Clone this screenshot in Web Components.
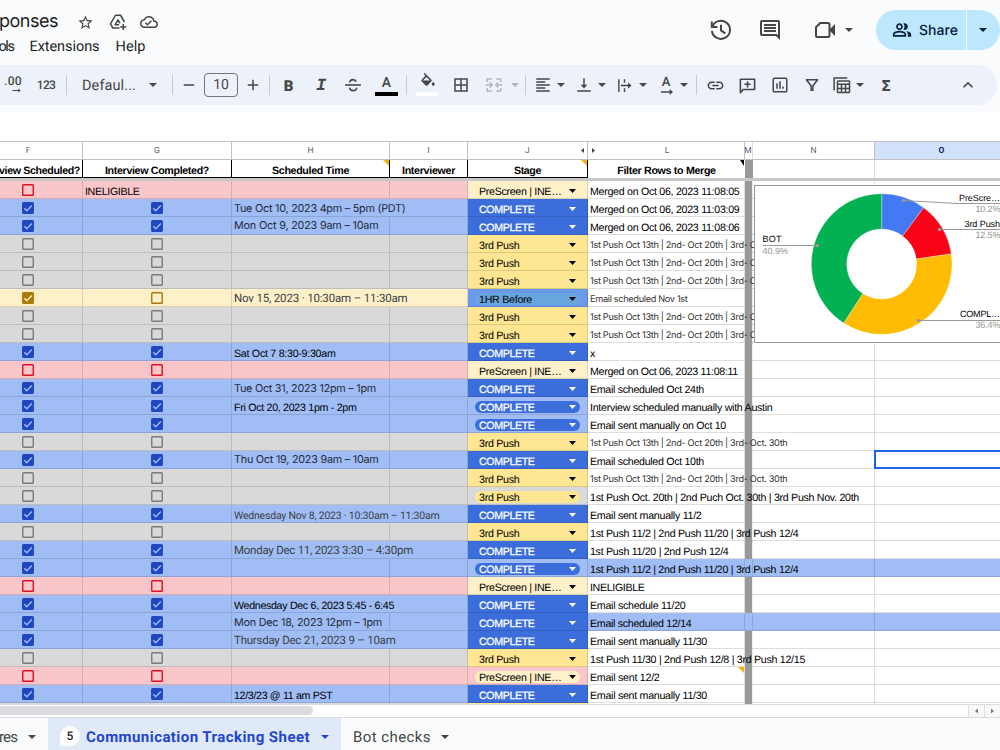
<!DOCTYPE html>
<html lang="en">
<head>
<meta charset="utf-8">
<title>Communication Tracking Sheet</title>
<style>
  html, body { margin: 0; padding: 0; }
  body {
    width: 1000px;
    height: 750px;
    overflow: hidden;
    background: #f9fbfd;
    font-family: "Liberation Sans", Arial, sans-serif;
    text-rendering: geometricPrecision;
  }
</style>
</head>
<body>
<sheets-app></sheets-app>

<script>
const ICONS = {
  star: '<path d="M22 9.24l-7.19-.62L12 2 9.19 8.63 2 9.24l5.46 4.73L5.82 21 12 17.27 18.18 21l-1.63-7.03L22 9.24zM12 15.4l-3.76 2.27 1-4.28-3.32-2.88 4.38-.38L12 6.1l1.71 4.04 4.38.38-3.32 2.88 1 4.28L12 15.4z"/>',
  drive: '<g fill="none" stroke="currentColor" stroke-width="2" stroke-linejoin="round"><path d="M14 20H5.2L2 14.6 8.6 3h6.8l5.2 9"/><path d="M13.5 15.8H8.2L12 9.2l2.6 4.6"/><path d="M19 14.5v8M15 18.5h8"/></g>',
  cloud: '<path d="M19.35 10.04C18.67 6.59 15.64 4 12 4 9.11 4 6.6 5.64 5.35 8.04 2.34 8.36 0 10.91 0 14c0 3.31 2.69 6 6 6h13c2.76 0 5-2.24 5-5 0-2.64-2.05-4.78-4.65-4.96zM19 18H6c-2.21 0-4-1.79-4-4 0-2.05 1.53-3.76 3.56-3.97l1.07-.11.5-.95C8.08 7.14 9.94 6 12 6c2.62 0 4.88 1.86 5.39 4.43l.3 1.5 1.53.11c1.56.1 2.78 1.41 2.78 2.96 0 1.65-1.35 3-3 3zm-9-3.82l-2.09-2.09L6.5 13.5 10 17l6.01-6.01-1.41-1.41z"/>',
  history: '<g fill="none" stroke="currentColor" stroke-width="2"><path d="M3.2 9.2A9.1 9.1 0 1 1 2.9 13"/><path d="M2.8 3.6V9h5.6"/><path d="M12 6.8v5.6l4.3 3"/></g>',
  comment: '<path d="M21.99 4c0-1.1-.89-2-1.99-2H4c-1.1 0-2 .9-2 2v12c0 1.1.9 2 2 2h14l4 4-.01-18zM20 4v13.17L18.83 16H4V4h16zM6 12h12v2H6zm0-3h12v2H6zm0-3h12v2H6z"/>',
  video: '<path d="M7.2 5H15a1.5 1.5 0 0 1 1.5 1.5v11A1.5 1.5 0 0 1 15 19H4.5a1.5 1.5 0 0 1-1.5-1.5V9.2z" fill="none" stroke="currentColor" stroke-width="2" stroke-linejoin="round"/><path d="M17 11l5-5v12l-5-5z"/>',
  people: '<path d="M16.67 13.13C18.04 14.06 19 15.32 19 17v3h4v-3c0-2.18-3.57-3.47-6.33-3.87zM15 12c2.21 0 4-1.79 4-4s-1.79-4-4-4c-.47 0-.91.1-1.33.24C14.5 5.27 15 6.58 15 8s-.5 2.73-1.33 3.76c.42.14.86.24 1.33.24zM9 12c2.21 0 4-1.79 4-4s-1.79-4-4-4-4 1.79-4 4 1.79 4 4 4zm0-6c1.1 0 2 .9 2 2s-.9 2-2 2-2-.9-2-2 .9-2 2-2zm0 7c-2.67 0-8 1.34-8 4v3h16v-3c0-2.66-5.33-4-8-4zm6 5H3v-.99C3.2 16.29 6.3 15 9 15s5.8 1.29 6 2v1z"/>',
  minus: '<path d="M5 11h14v2H5z"/>',
  plus: '<path d="M5 11h6V5h2v6h6v2h-6v6h-2v-6H5z"/>',
  strike: '<g fill="none" stroke="currentColor" stroke-width="2.1"><path d="M1.5 12h21"/><path d="M7.5 8.6C7.8 6.2 9.5 4.8 12 4.8c2 0 3.6 1 4.3 2.8"/><path d="M7.3 15.5c.4 2.5 2.2 4 4.8 4 2.8 0 4.7-1.4 4.7-4"/></g>',
  fill: '<path d="M16.56 8.94L7.62 0 6.21 1.41l2.38 2.38-5.15 5.15c-.59.59-.59 1.54 0 2.12l5.5 5.5c.29.29.68.44 1.06.44s.77-.15 1.06-.44l5.5-5.5c.59-.58.59-1.53 0-2.12zM5.21 10L10 5.21 14.79 10H5.21zM19 11.5s-2 2.17-2 3.5c0 1.1.9 2 2 2s2-.9 2-2c0-1.33-2-3.5-2-3.5z"/>',
  borders: '<path d="M3 3v18h18V3H3zm8 16H5v-6h6v6zm0-8H5V5h6v6zm8 8h-6v-6h6v6zm0-8h-6V5h6v6z"/>',
  merge: '<g fill="none" stroke="currentColor" stroke-width="2"><path d="M9 4H3v4M9 20H3v-4M15 4h6v4M15 20h6v-4"/><path d="M1 12h8M23 12h-8M6.5 8.8L9.5 12l-3 3.2M17.5 8.8L14.5 12l3 3.2"/></g>',
  alignLeft: '<path d="M15 15H3v2h12v-2zm0-8H3v2h12V7zM3 13h18v-2H3v2zm0 8h18v-2H3v2zM3 3v2h18V3H3z"/>',
  alignBottom: '<path d="M16.5 11.5H13V3h-2v8.5H7.5L12 16.5zM3 19v2h18v-2H3z"/>',
  wrap: '<path d="M3 3h2v18H3zM11 3h2v5h-2zM11 16h2v5h-2zM7 11h10V7.8l5 4.2-5 4.2V13H7z"/>',
  link: '<path d="M3.9 12c0-1.71 1.39-3.1 3.1-3.1h4V7H7c-2.76 0-5 2.24-5 5s2.24 5 5 5h4v-1.9H7c-1.71 0-3.1-1.39-3.1-3.1zM8 13h8v-2H8v2zm9-6h-4v1.9h4c1.71 0 3.1 1.39 3.1 3.1s-1.39 3.1-3.1 3.1h-4V17h4c2.76 0 5-2.24 5-5s-2.24-5-5-5z"/>',
  addComment: '<path d="M3 21V4h18v13H6.5z" fill="none" stroke="currentColor" stroke-width="2" stroke-linejoin="round"/><path d="M11 6.5h2v3h3v2h-3v3h-2v-3H8v-2h3z"/>',
  chart: '<rect x="3" y="3" width="18" height="18" rx="1.5" fill="none" stroke="currentColor" stroke-width="2"/><path d="M7 9.5h2V17H7zM11 7h2v10h-2zM15 14h2v3h-2z"/>',
  filter: '<path d="M4.5 5h15L13.2 13v6h-2.4v-6z" fill="none" stroke="currentColor" stroke-width="2" stroke-linejoin="round"/>',
  table: '<g fill="none" stroke="currentColor" stroke-width="2"><path d="M1.5 19V2.5H19"/><rect x="6" y="6.5" width="16" height="15.5" rx="1"/><path d="M6 11h16M6 16.5h16M11.3 11v11M16.7 11v11"/></g>',
  chevron: '<path d="M12 8l-6 6 1.41 1.41L12 10.83l4.59 4.58L18 14z"/>',
  decimal: '<path d="M3 11h13V7.5l5 4.5-5 4.5V13H3z"/>'
};

// Line of text, letter-spaced to a given width
class FitText extends HTMLElement {
  constructor() {
    super();
    this.attachShadow({ mode: 'open' });
    this.shadowRoot.innerHTML = `
      <style>
        :host { display: block; white-space: nowrap; flex: none; }
        span { display: inline-block; vertical-align: top; }
      </style>
      <span><slot></slot></span>
    `;
  }

  connectedCallback() {
    const w = parseFloat(this.getAttribute('w'));
    const chars = this.textContent.length;
    if (!w || !chars) return;
    const span = this.shadowRoot.querySelector('span');
    const natural = span.getBoundingClientRect().width;
    span.style.letterSpacing = ((w - natural) / chars).toFixed(3) + 'px';
  }
}
customElements.define('fit-text', FitText);

class SheetIcon extends HTMLElement {
  constructor() {
    super();
    this.attachShadow({ mode: 'open' });
  }

  connectedCallback() {
    const size = this.getAttribute('size') || 18;
    this.shadowRoot.innerHTML = `
      <style>
        :host { display: block; flex: none; width: ${size}px; height: ${size}px; }
        svg { display: block; fill: currentColor; }
      </style>
      <svg width="${size}" height="${size}" viewBox="0 0 24 24">${ICONS[this.getAttribute('name')]}</svg>
    `;
  }
}
customElements.define('sheet-icon', SheetIcon);

class DropArrow extends HTMLElement {
  constructor() {
    super();
    this.attachShadow({ mode: 'open' });
    this.shadowRoot.innerHTML = `
      <style>
        :host { display: block; flex: none; width: 8px; height: 4px; }
        div { width: 100%; height: 100%; background: currentColor; clip-path: polygon(0 0, 100% 0, 50% 100%); }
      </style>
      <div></div>
    `;
  }
}
customElements.define('drop-arrow', DropArrow);

class SheetHeader extends HTMLElement {
  constructor() {
    super();
    this.attachShadow({ mode: 'open' });
    this.shadowRoot.innerHTML = `
      <style>
        :host { display: flex; justify-content: space-between; height: 65px; color: #444746; }
        .row { display: flex; align-items: center; }
        .title { height: 26px; padding-top: 9px; color: #1f1f1f; font: 18px/26px Inter, sans-serif; }
        .title sheet-icon { color: #444746; }
        .menu { height: 24px; gap: 16px; color: #1f1f1f; font: 14.5px/24px Roboto, sans-serif; }
        .right { align-items: center; height: 40px; padding-top: 10px; }
        .share {
          display: flex; align-items: center; box-sizing: border-box;
          width: 90px; height: 40px; padding-left: 16px; gap: 7px; margin-left: 23px;
          border-radius: 20px 0 0 20px; background: #bce7fe; color: #08203a;
          font: 500 14px/20px Inter, sans-serif;
        }
        .more {
          display: flex; align-items: center; box-sizing: border-box;
          width: 33px; height: 40px; padding-left: 12px; margin-left: 1px;
          border-radius: 0 20px 20px 0; background: #bce7fe; color: #08203a;
        }
        .share fit-text { padding-top: 1px; }
      </style>
      <div>
        <div class="row title">
          <fit-text w="59" style="margin-left:-1px">ponses</fit-text>
          <sheet-icon name="star" size="17" style="margin-left:18.5px"></sheet-icon>
          <sheet-icon name="drive" size="18" style="margin-left:15px"></sheet-icon>
          <sheet-icon name="cloud" size="18" style="margin-left:13.5px"></sheet-icon>
        </div>
        <div class="row menu">
          <fit-text w="15" style="margin-left:-1.5px">ols</fit-text>
          <fit-text w="70">Extensions</fit-text>
          <fit-text w="30">Help</fit-text>
        </div>
      </div>
      <div class="row right">
        <sheet-icon name="history" size="24"></sheet-icon>
        <sheet-icon name="comment" size="24" style="margin-left:25px"></sheet-icon>
        <sheet-icon name="video" size="24" style="margin-left:31px"></sheet-icon>
        <drop-arrow style="margin-left:8px"></drop-arrow>
        <div class="share"><sheet-icon name="people" size="20"></sheet-icon><fit-text w="39">Share</fit-text></div>
        <div class="more"><drop-arrow></drop-arrow></div>
      </div>
    `;
  }
}
customElements.define('sheet-header', SheetHeader);

// [kind, value, centre, width, color]
const TOOLS = [
  ['html', '<div class="dec"><fit-text w="18">.00</fit-text><sheet-icon name="decimal" size="11"></sheet-icon></div>', 13, 20],
  ['html', '<fit-text w="18.5" style="font:500 12px Roboto">123</fit-text>', 46, 19],
  ['sep', '', 66.5, 1],
  ['html', '<fit-text w="54" style="font:14.5px Roboto">Defaul...</fit-text>', 109, 54],
  ['arrow', '', 153, 8],
  ['sep', '', 172.5, 1],
  ['icon', 'minus', 189, 18],
  ['html', '<div class="size">10</div>', 221, 34],
  ['icon', 'plus', 253, 18],
  ['sep', '', 269.5, 1],
  ['html', '<b>B</b>', 288.5, 12],
  ['html', '<i>I</i>', 321, 12],
  ['icon', 'strike', 353, 18],
  ['html', '<div class="swatch"><span>A</span><div style="background:#000"></div></div>', 386.5, 23],
  ['sep', '', 406.5, 1],
  ['html', '<div class="swatch"><sheet-icon name="fill" size="18"></sheet-icon><div style="background:#fff"></div></div>', 427.5, 23],
  ['icon', 'borders', 461, 18],
  ['icon', 'merge', 494, 18, '#b3b6bb'],
  ['arrow', '', 515, 8, '#b3b6bb'],
  ['sep', '', 525.5, 1],
  ['icon', 'alignLeft', 543, 18],
  ['arrow', '', 561, 8],
  ['icon', 'alignBottom', 584, 18],
  ['arrow', '', 602, 8],
  ['icon', 'wrap', 624.5, 17],
  ['arrow', '', 643, 8],
  ['html', '<div class="rot"><span>A</span><sheet-icon name="decimal" size="16"></sheet-icon></div>', 666, 16],
  ['arrow', '', 684, 8],
  ['sep', '', 696.5, 1],
  ['icon', 'link', 715.5, 19],
  ['icon', 'addComment', 747.5, 19],
  ['icon', 'chart', 780, 18],
  ['icon', 'filter', 812, 18],
  ['icon', 'table', 841.5, 18],
  ['arrow', '', 860, 8],
  ['html', '<span class="sum">Σ</span>', 886, 12],
  ['icon', 'chevron', 968, 20]
];

class SheetToolbar extends HTMLElement {
  constructor() {
    super();
    this.attachShadow({ mode: 'open' });
    let end = 0;
    const items = TOOLS.map(([kind, value, centre, width, color]) => {
      const gap = centre - width / 2 - end;
      end = centre + width / 2;
      let inner = value;
      if (kind === 'icon') inner = `<sheet-icon name="${value}" size="${width}"></sheet-icon>`;
      if (kind === 'arrow') inner = '<drop-arrow></drop-arrow>';
      return `<div class="item ${kind}" style="width:${width}px;margin-left:${gap}px;${color ? 'color:' + color : ''}">${inner}</div>`;
    }).join('');

    this.shadowRoot.innerHTML = `
      <style>
        :host {
          display: flex; align-items: center; width: 997px; height: 40px; margin-bottom: 8px;
          border-radius: 0 20px 20px 0; background: #ecf1fa; color: #444746;
          font-family: Roboto, sans-serif;
        }
        .item { display: flex; justify-content: center; align-items: center; flex: none; height: 40px; }
        .sep { height: 20px; background: #c6cacf; }
        .size { box-sizing: border-box; width: 34px; height: 24px; border: 1px solid #747775; border-radius: 4px; font: 14px/23px Roboto, sans-serif; text-align: center; }
        b { padding-top: 1px; font: 900 15px/20px Roboto, sans-serif; }
        i { padding-top: 3px; font: italic bold 17px/20px "Liberation Mono", monospace; }
        .sum { padding-top: 1px; font: bold 15px/20px "DejaVu Sans", sans-serif; }
        .dec { display: flex; flex-direction: column; align-items: flex-end; padding-top: 1px; font: 500 12px/12px Roboto, sans-serif; }
        .dec sheet-icon { margin-top: -2px; }
        .swatch { display: flex; flex-direction: column; justify-content: flex-end; align-items: center; height: 24px; margin-top: -3px; font: 500 14px/16px Roboto, sans-serif; }
        .swatch span { margin-bottom: 1px; }
        .swatch sheet-icon { margin-bottom: 1px; }
        .swatch div { width: 23px; height: 4px; flex: none; }
        .rot { display: flex; flex-direction: column; align-items: center; font: 500 13px/13px Roboto, sans-serif; }
        .rot sheet-icon { margin: -5px 0 -5px 2px; }
      </style>
      ${items}
    `;
  }
}
customElements.define('sheet-toolbar', SheetToolbar);

class CheckBox extends HTMLElement {
  constructor() {
    super();
    this.attachShadow({ mode: 'open' });
  }

  connectedCallback() {
    const color = this.getAttribute('color');
    const checked = this.hasAttribute('checked');
    this.shadowRoot.innerHTML = `
      <style>
        :host { display: block; width: 12px; height: 12px; }
        svg { display: block; }
      </style>
      <svg width="12" height="12" viewBox="0 0 12 12">
        <rect x=".75" y=".75" width="10.5" height="10.5" rx=".8" stroke="${color}" stroke-width="1.4" fill="${checked ? color : 'none'}"/>
        ${checked ? '<path d="M2.3 6.2l2.5 2.5 5-5.2" fill="none" stroke="var(--cell)" stroke-width="1.3"/>' : ''}
      </svg>
    `;
  }
}
customElements.define('check-box', CheckBox);

const STAGES = {
  C: { text: 'COMPLETE', w: 55.5, cell: '#3c6edb', chip: '#3c6edb', color: '#fff' },
  P: { text: '3rd Push', w: 40.5, cell: '#fee692', chip: '#fee692', color: '#000' },
  S: { text: 'PreScreen | INE…', w: 82.5, cell: '#fef1ca', chip: '#fef1ca', color: '#000' },
  H: { text: '1HR Before', w: 53, cell: '#6a99ee', chip: '#68a5de', color: '#000' }
};

class StageChip extends HTMLElement {
  constructor() {
    super();
    this.attachShadow({ mode: 'open' });
  }

  connectedCallback() {
    const stage = STAGES[this.getAttribute('stage')];
    this.shadowRoot.innerHTML = `
      <style>
        :host { display: block; padding: 4px 7px 0 7px; }
        div {
          display: flex; justify-content: space-between; align-items: center; box-sizing: border-box;
          height: 12px; padding: 0 4px; border-radius: 6px;
          background: ${stage.chip}; color: ${stage.color}; font-size: 10.67px; line-height: 12px;
        }
        fit-text { padding-top: 2px; ${stage.color === '#fff' ? '-webkit-text-stroke: .25px #fff;' : ''} }
        drop-arrow { width: 7px; }
      </style>
      <div><fit-text w="${stage.w}">${stage.text}</fit-text><drop-arrow></drop-arrow></div>
    `;
  }
}
customElements.define('stage-chip', StageChip);

const TINTS = {
  red: { bg: '#f9c6c9', box: '#dc1024' },
  blue: { bg: '#a1bdf6', box: '#2047bd' },
  grey: { bg: '#d9d9d9', box: '#7a7a7a' },
  yellow: { bg: '#fef1ca', box: '#a87a06' }
};

const PUSH = ['1st Push Oct 13th | 2nd- Oct 20th | 3rd- Oct. 30th', 197.5, 'g'];

// time: [text, width, font, baseline, overflows], note: [text, width, font]
const ROWS = [
  { tint: 'red', f: 0, label: 'INELIGIBLE', stage: 'S', note: ['Merged on Oct 06, 2023 11:08:05', 149.5] },
  { tint: 'blue', f: 1, g: 1, time: ['Tue Oct 10, 2023 4pm – 5pm (PDT)', 171.5, 'G', 14, 1], stage: 'C', note: ['Merged on Oct 06, 2023 11:03:09', 149.5] },
  { tint: 'blue', f: 1, g: 1, time: ['Mon Oct 9, 2023 9am – 10am', 144.5, 'G', 13], stage: 'C', note: ['Merged on Oct 06, 2023 11:08:06', 149.5] },
  { tint: 'grey', f: 0, g: 0, stage: 'P', note: PUSH },
  { tint: 'grey', f: 0, g: 0, stage: 'P', note: PUSH },
  { tint: 'grey', f: 0, g: 0, stage: 'P', note: PUSH },
  { tint: 'yellow', f: 1, g: 0, time: ['Nov 15, 2023 · 10:30am – 11:30am', 173.5, 'R', 13, 1], stage: 'H', note: ['Email scheduled Nov 1st', 97.5, 'g'] },
  { tint: 'grey', f: 0, g: 0, stage: 'P', note: PUSH },
  { tint: 'grey', f: 0, g: 0, stage: 'P', note: PUSH },
  { tint: 'blue', f: 1, g: 1, time: ['Sat Oct 7 8:30-9:30am', 101.5, 'A', 15], stage: 'C', note: ['x', 5.5] },
  { tint: 'red', f: 0, g: 0, stage: 'S', note: ['Merged on Oct 06, 2023 11:08:11', 148] },
  { tint: 'blue', f: 1, g: 1, time: ['Tue Oct 31, 2023 12pm – 1pm', 142, 'G', 14], stage: 'C', note: ['Email scheduled Oct 24th', 114] },
  { tint: 'blue', f: 1, g: 1, time: ['Fri Oct 20, 2023 1pm - 2pm', 122.5, 'A', 15], stage: 'C', pill: 1, note: ['Interview scheduled manually with Austin', 182.5] },
  { tint: 'blue', f: 1, g: 1, stage: 'C', pill: 1, note: ['Email sent manually on Oct 10', 136] },
  { tint: 'grey', f: 0, g: 0, stage: 'P', note: PUSH },
  { tint: 'blue', f: 1, g: 1, time: ['Thu Oct 19, 2023 9am – 10am', 144.5, 'G', 13], stage: 'C', note: ['Email scheduled Oct 10th', 114] },
  { tint: 'grey', f: 0, g: 0, stage: 'P', note: PUSH },
  { tint: 'grey', f: 0, g: 0, stage: 'P', pill: 1, note: ['1st Push Oct. 20th | 2nd Puch Oct. 30th | 3rd Push Nov. 20th', 269] },
  { tint: 'blue', f: 1, g: 1, time: ['Wednesday Nov 8, 2023 · 10:30am – 11:30am', 205.5, 'r', 15, 1], stage: 'C', note: ['Email sent manually 11/2', 111.5] },
  { tint: 'grey', f: 0, g: 0, stage: 'P', note: ['1st Push 11/2 | 2nd Push 11/20 | 3rd Push 12/4', 208.5] },
  { tint: 'blue', f: 1, g: 1, time: ['Monday Dec 11, 2023 3:30 – 4:30pm', 179, 'R', 13, 1], stage: 'C', note: ['1st Push 11/20 | 2nd Push 12/4', 138.5] },
  { tint: 'blue', f: 1, g: 1, stage: 'C', pill: 1, full: 1, note: ['1st Push 11/2 | 2nd Push 11/20 | 3rd Push 12/4', 208.5] },
  { tint: 'red', f: 0, g: 0, stage: 'S', note: ['INELIGIBLE', 54.5] },
  { tint: 'blue', f: 1, g: 1, time: ['Wednesday Dec 6, 2023 5:45 - 6:45', 160, 'A', 15, 1], stage: 'C', note: ['Email schedule 11/20', 95.5] },
  { tint: 'blue', f: 1, g: 1, time: ['Mon Dec 18, 2023 12pm – 1pm', 148, 'G', 14], stage: 'C', full: 1, note: ['Email scheduled 12/14', 101.5] },
  { tint: 'blue', f: 1, g: 1, time: ['Thursday Dec 21, 2023 9 – 10am', 161.5, 'R', 13, 1], stage: 'C', note: ['Email sent manually 11/30', 117] },
  { tint: 'grey', f: 0, g: 0, stage: 'P', note: ['1st Push 11/30 | 2nd Push 12/8 | 3rd Push 12/15', 215] },
  { tint: 'red', f: 0, g: 0, stage: 'S', pill: 1, flag: 1, note: ['Email sent 12/2', 69.5] },
  { tint: 'blue', f: 1, g: 1, time: ['12/3/23 @ 11 am PST', 98.5, 'A', 15], stage: 'C', note: ['Email sent manually 11/30', 117] },
  { tint: 'grey', stage: 'P', last: 1 }
];

const COLUMNS = '83px 149px 158px 78px 120px 157px 8px 122px 200px';

class SheetRow extends HTMLElement {
  constructor() {
    super();
    this.attachShadow({ mode: 'open' });
  }

  connectedCallback() {
    const row = this.data;
    const { bg, box } = TINTS[row.tint];
    const stageBg = row.pill ? bg : STAGES[row.stage].cell;
    const rest = row.full ? bg : '#fff';
    const check = v => v === undefined ? '' : `<check-box color="${box}" ${v ? 'checked' : ''}></check-box>`;
    const text = (t, cls, base) => `<fit-text class="${cls}" style="line-height:${18 + 2 * (base - 13)}px" w="${t[1]}">${t[0]}</fit-text>`;

    this.shadowRoot.innerHTML = `
      <style>
        :host { display: grid; grid-template-columns: ${COLUMNS}; height: 18px; --cell: ${bg}; font-size: 10.67px; color: #000; }
        .cell { box-sizing: border-box; height: 18px; min-width: 0; border: 0 solid rgba(0, 0, 0, .13); border-width: 0 1px 1px 0; background: ${bg}; }
        .check { display: flex; justify-content: center; padding-top: 2.5px; }
        .check.f { padding-right: 27px; }
        .open { border-right-color: transparent; }
        .text { padding-left: 2px; }
        .note { position: relative; padding-left: 2px; }
        .flag { position: absolute; right: 0; top: 0; width: 6px; height: 6px; background: #f6b20a; clip-path: polygon(0 0, 100% 0, 100% 100%); }
        .rest { background: ${rest}; }
        .stage { background: ${stageBg}; }
        .bar { background: ${row.full ? bg : '#999'}; ${row.full ? '' : 'border-bottom-color: transparent; border-right: 1px solid #eee;'} }
        fit-text { position: relative; z-index: 1; height: 17px; width: 0; }
        .G { font-family: Inter, sans-serif; font-size: 10.8px; color: #222a3a; }
        .g { font-family: Inter, sans-serif; font-size: 9.2px; color: #333; }
        .R { font-family: Roboto, sans-serif; font-size: 11.5px; color: #3c4043; }
        .r { font-family: Roboto, sans-serif; font-size: 10.5px; color: #3c4043; }
      </style>
      <div class="cell check f">${check(row.f)}</div>
      <div class="cell ${row.label ? 'text' : 'check'}">${row.label ? text([row.label, 54.5], 'A', 15) : check(row.g)}</div>
      <div class="cell text ${row.time && row.time[4] ? 'open' : ''}">${row.time ? text(row.time, row.time[2], row.time[3]) : ''}</div>
      <div class="cell"></div>
      <div class="cell stage">${row.last ? '' : `<stage-chip stage="${row.stage}"></stage-chip>`}</div>
      <div class="cell rest note">${row.flag ? '<div class="flag"></div>' : ''}${row.note ? text(row.note, row.note[2] || 'A', 15) : ''}</div>
      <div class="cell bar"></div>
      <div class="cell rest"></div>
      <div class="cell rest"></div>
    `;
  }
}
customElements.define('sheet-row', SheetRow);

class DonutChart extends HTMLElement {
  constructor() {
    super();
    this.attachShadow({ mode: 'open' });
    const slices = [[10.2, '#4479f6'], [12.5, '#fb0317'], [36.4, '#ffbc03'], [40.9, '#03b152']];
    const cx = 126.7, cy = 78, R = 70.3, r = 35;
    let acc = 0;
    const point = (rad, t) => `${(cx + rad * Math.sin(t)).toFixed(2)} ${(cy - rad * Math.cos(t)).toFixed(2)}`;
    const paths = slices.map(([pct, color]) => {
      const a = acc / 100 * 2 * Math.PI;
      acc += pct;
      const b = acc / 100 * 2 * Math.PI;
      return `<path d="M${point(R, a)}A${R} ${R} 0 0 1 ${point(R, b)}L${point(r, b)}A${r} ${r} 0 0 0 ${point(r, a)}z" fill="${color}" stroke="#fff" stroke-width=".3"/>`;
    }).join('');

    this.shadowRoot.innerHTML = `
      <style>
        :host { display: block; box-sizing: border-box; width: 260px; height: 158px; border: 1px solid #999; background: #fff; }
        svg { display: block; font: 9px "Liberation Sans", Arial, sans-serif; }
        .line { fill: none; stroke: #999; stroke-width: 1; }
        .dot { fill: #999; }
        .pct { fill: #959595; }
      </style>
      <svg width="258" height="156">
        ${paths}
        <path class="line" d="M148 14.5l55 3h60M184 43.5h80M163 134.5h100M8 59.5h55"/>
        <g class="dot">
          <circle cx="148.5" cy="14.5" r="1.8"/><circle cx="184.5" cy="43.5" r="1.8"/>
          <circle cx="163.5" cy="134.5" r="1.8"/><circle cx="62.5" cy="59.5" r="1.8"/>
        </g>
        <text x="204" y="15" textLength="41">PreScre…</text>
        <text class="pct" x="220.5" y="26" textLength="25">10.2%</text>
        <text x="209.5" y="41" textLength="35.5">3rd Push</text>
        <text class="pct" x="220.5" y="52" textLength="25">12.5%</text>
        <text x="205" y="131" textLength="40">COMPL…</text>
        <text class="pct" x="220.5" y="142" textLength="25">36.4%</text>
        <text x="7.5" y="56" textLength="19">BOT</text>
        <text class="pct" x="7.5" y="68" textLength="25.5">40.9%</text>
      </svg>
    `;
  }
}
customElements.define('donut-chart', DonutChart);

class SheetGrid extends HTMLElement {
  constructor() {
    super();
    this.attachShadow({ mode: 'open' });
    this.shadowRoot.innerHTML = `
      <style>
        :host { display: block; position: relative; box-sizing: border-box; height: 591px; padding-top: 28px; overflow: hidden; background: #fff; }
        .grid { display: grid; grid-template-columns: ${COLUMNS}; }
        .letters { height: 19px; border: 1px solid #c0c0c0; border-width: 1px 0; box-sizing: border-box; color: #575b5f; font: 8.5px/18px Roboto, "Liberation Sans", sans-serif; text-align: center; }
        .letters div { border-right: 1px solid #c0c0c0; height: 17px; box-sizing: border-box; min-width: 0; }
        .letters .f { padding-right: 26px; }
        .letters .j { display: flex; justify-content: center; align-items: center; padding-left: 51px; }
        .letters .l { display: flex; align-items: center; padding-left: 4px; }
        .j span { flex: 1; text-align: left; padding-left: 6px; }
        .l span { flex: 1; padding-right: 8px; }
        .tri { width: 3px; height: 5px; background: #444; margin-right: 3px; clip-path: polygon(0 50%, 100% 0, 100% 100%); }
        .l .tri { clip-path: polygon(0 0, 100% 50%, 0 100%); }
        .letters .m { border-right-color: #ddd; overflow: hidden; text-indent: -1px; }
        .letters .o { background: #d1e1fc; color: #0b2a63; font-weight: 700; padding-right: 66px; }
        .head { height: 18px; font: bold 10.67px/22px "Liberation Sans", Arial, sans-serif; color: #000; }
        .head > div { position: relative; display: flex; justify-content: center; box-sizing: border-box; height: 18px; min-width: 0; border: 0 solid #000; border-width: 0 1px 1px 0; }
        .head > .clear { border-color: transparent #ddd transparent transparent; }
        .head > .bar { background: #999; border-color: transparent; }
        .flag { position: absolute; right: 0; top: 0; width: 6px; height: 6px; background: #f6b20a; clip-path: polygon(0 0, 100% 0, 100% 100%); }
        .freeze { height: 3px; background: #c8c8c8; }
        .rows { display: flex; flex-direction: column; }
        donut-chart { position: absolute; left: 754px; top: 72px; z-index: 3; }
        .cursor { position: absolute; left: 874px; top: 337px; width: 140px; height: 19px; box-sizing: border-box; border: 2px solid #1a63e6; z-index: 2; }
      </style>
      <div class="grid letters">
        <div class="f">F</div><div>G</div><div>H</div><div>I</div>
        <div class="j"><span>J</span><i class="tri"></i></div>
        <div class="l"><i class="tri"></i><span>L</span></div>
        <div class="m">M</div><div>N</div><div class="o">O</div>
      </div>
      <div class="grid head">
        <div style="justify-content:flex-end;padding-right:2px"><fit-text w="81">view Scheduled?</fit-text></div>
        <div><fit-text w="104">Interview Completed?</fit-text></div>
        <div><fit-text w="77">Scheduled Time</fit-text><i class="flag"></i></div>
        <div><fit-text w="53">Interviewer</fit-text></div>
        <div><fit-text w="27">Stage</fit-text><i class="flag"></i></div>
        <div class="clear" style="border-right-color:transparent;padding-left:1px"><fit-text w="98.5">Filter Rows to Merge</fit-text><i class="flag" style="background:#000;width:4px"></i></div>
        <div class="clear bar"></div><div class="clear"></div><div class="clear"></div>
      </div>
      <div class="freeze"></div>
      <div class="rows"></div>
      <div class="cursor"></div>
      <donut-chart></donut-chart>
    `;
    const rows = this.shadowRoot.querySelector('.rows');
    ROWS.forEach(data => {
      const row = document.createElement('sheet-row');
      row.data = data;
      rows.appendChild(row);
    });
  }
}
customElements.define('sheet-grid', SheetGrid);

class SheetScrollbar extends HTMLElement {
  constructor() {
    super();
    this.attachShadow({ mode: 'open' });
    this.shadowRoot.innerHTML = `
      <style>
        :host { display: flex; justify-content: space-between; box-sizing: border-box; height: 14px; border: 1px solid #dadcdf; border-width: 1px 0; background: #fff; }
        .thumb { width: 313px; height: 9px; margin-top: 1px; border-radius: 0 5px 5px 0; background: #dadce0; }
        .buttons { display: flex; }
        .buttons div { display: flex; align-items: center; justify-content: center; box-sizing: border-box; width: 16px; border-left: 1px solid #dcdcdc; background: #f8f8f8; }
        i { width: 3px; height: 5px; background: #7a7a7a; clip-path: polygon(0 50%, 100% 0, 100% 100%); }
        .next { clip-path: polygon(0 0, 100% 50%, 0 100%); }
      </style>
      <div class="thumb"></div>
      <div class="buttons"><div><i></i></div><div><i class="next"></i></div></div>
    `;
  }
}
customElements.define('sheet-scrollbar', SheetScrollbar);

class SheetTabs extends HTMLElement {
  constructor() {
    super();
    this.attachShadow({ mode: 'open' });
    this.shadowRoot.innerHTML = `
      <style>
        :host { display: flex; height: 32px; background: #f9fbfd; color: #444746; font: 15px/28px Roboto, sans-serif; }
        .tab { display: flex; align-items: center; box-sizing: border-box; height: 32px; padding-top: 6px; }
        .first { width: 48px; }
        .active { width: 293px; padding-left: 12px; background: #e0e9f7; color: #2146cf; font-weight: 700; }
        .badge { width: 20px; height: 20px; margin: -3px 6px 0 0; border-radius: 50% 50% 50% 2px; background: #fff; color: #1f1f1f; font: 500 12px/20px Roboto, sans-serif; text-align: center; }
      </style>
      <div class="tab first"><fit-text w="18" style="margin-left:-1px">res</fit-text><drop-arrow style="margin-left:11px"></drop-arrow></div>
      <div class="tab active"><div class="badge">5</div><fit-text w="224">Communication Tracking Sheet</fit-text><drop-arrow style="margin-left:11px"></drop-arrow></div>
      <div class="tab"><fit-text w="78" style="margin-left:12px">Bot checks</fit-text><drop-arrow style="margin-left:10px"></drop-arrow></div>
    `;
  }
}
customElements.define('sheet-tabs', SheetTabs);

class SheetsApp extends HTMLElement {
  constructor() {
    super();
    this.attachShadow({ mode: 'open' });
    this.shadowRoot.innerHTML = `
      <style>
        :host { display: flex; flex-direction: column; width: 1000px; height: 750px; overflow: hidden; }
        :host > * { flex: none; }
      </style>
      <sheet-header></sheet-header>
      <sheet-toolbar></sheet-toolbar>
      <sheet-grid></sheet-grid>
      <sheet-scrollbar></sheet-scrollbar>
      <sheet-tabs></sheet-tabs>
    `;
  }
}
customElements.define('sheets-app', SheetsApp);
</script>
</body>
</html>
